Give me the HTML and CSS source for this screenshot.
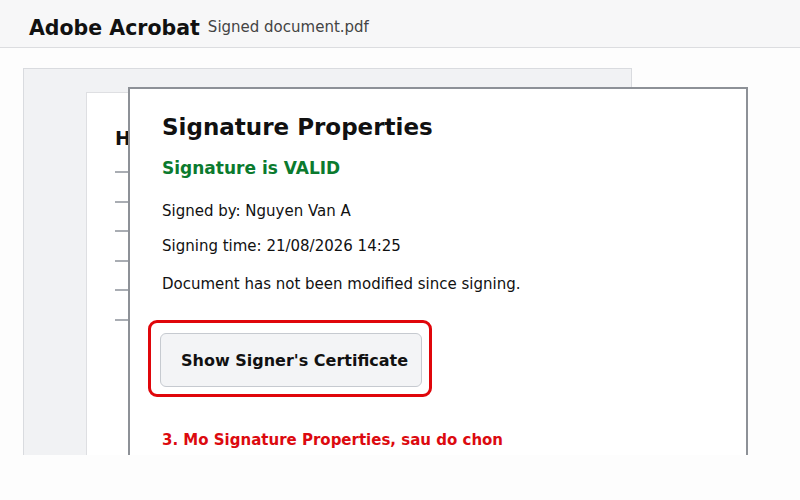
FILE: index.html
```html
<!DOCTYPE html>
<html lang="en">
<head>
    <meta charset="UTF-8">
    <meta name="viewport" content="width=device-width, initial-scale=1.0">
    <title>Adobe Acrobat - Signed document.pdf</title>
    <link rel="stylesheet" href="styles.css">
</head>
<body>
    <div class="app">
        <div class="topbar">
            <span class="app-name">Adobe Acrobat</span>
            <span class="file-name">Signed document.pdf</span>
        </div>

        <div class="workspace">
            <div class="viewer">
                <div class="page">
                    <div class="page-title">H</div>
                    <div class="page-line"></div>
                    <div class="page-line"></div>
                    <div class="page-line"></div>
                    <div class="page-line"></div>
                    <div class="page-line"></div>
                    <div class="page-line"></div>
                </div>
            </div>

            <div class="dialog">
                <h2 class="dialog-title">Signature Properties</h2>
                <div class="status">Signature is VALID</div>
                <p class="info">Signed by: Nguyen Van A</p>
                <p class="info">Signing time: 21/08/2026 14:25</p>
                <p class="info info-last">Document has not been modified since signing.</p>

                <div class="highlight">
                    <button class="btn">Show Signer's Certificate</button>
                </div>

                <div class="note">3. Mo Signature Properties, sau do chon</div>
            </div>
        </div>
    </div>
</body>
</html>
```

FILE: styles.css
```css
html, body {
    margin: 0;
    padding: 0;
    background-color: #fdfdfd;
}
body {
    font-family: "DejaVu Sans", Verdana, sans-serif;
    color: #111;
}
.app {
    height: 455px;
    overflow: hidden;
}
.topbar {
    height: 48px;
    background-color: #f7f7f8;
    border-bottom: 1px solid #dcdde0;
    display: flex;
    align-items: center;
    padding: 8px 0 0 29px;
    box-sizing: border-box;
    gap: 8px;
}
.app-name {
    font-weight: bold;
    font-size: 20.5px;
}
.file-name {
    font-size: 15px;
    color: #444;
    margin-top: -2px;
}

.workspace {
    position: relative;
    padding: 20px 0 0 23px;
}
.viewer {
    width: 609px;
    height: 400px;
    background-color: #f1f2f4;
    border: 1px solid #d9dbdf;
    padding: 23px 0 0 62px;
    box-sizing: border-box;
}
.page {
    width: 500px;
    height: 400px;
    background-color: #fff;
    border: 1px solid #dedfe2;
    padding: 34px 0 0 28px;
    box-sizing: border-box;
}
.page-title {
    font-weight: bold;
    font-size: 19px;
    margin-bottom: 22px;
}
.page-line {
    width: 300px;
    height: 2px;
    background-color: #a9adb3;
    margin-bottom: 27.5px;
}

.dialog {
    position: absolute;
    left: 128px;
    top: 39px;
    width: 620px;
    height: 420px;
    background-color: #fff;
    border: 2px solid #8d9197;
    box-sizing: border-box;
    padding: 25px 0 0 32px;
}
.dialog-title {
    margin: 0;
    font-size: 23px;
    font-weight: bold;
    color: #111;
}
.status {
    margin-top: 18px;
    font-size: 17px;
    font-weight: bold;
    color: #0b7a2e;
}
.info {
    margin: 24px 0 0 0;
    font-size: 15px;
    line-height: 18px;
}
.info + .info {
    margin-top: 17px;
}
.info + .info-last {
    margin-top: 20px;
}
.highlight {
    margin: 27px 0 0 -14px;
    width: 284px;
    height: 77px;
    border: 3px solid #e0060b;
    border-radius: 9px;
    box-sizing: border-box;
    padding: 10px 0 0 9px;
}
.btn {
    width: 262px;
    height: 54px;
    background-color: #f3f4f6;
    border: 1px solid #c6cad0;
    border-radius: 6px;
    font-family: "DejaVu Sans", Verdana, sans-serif;
    font-weight: bold;
    font-size: 16px;
    color: #111;
    text-align: left;
    padding: 0 0 0 20px;
}
.note {
    margin-top: 34px;
    font-size: 15px;
    font-weight: bold;
    color: #dc0a0f;
}
```
